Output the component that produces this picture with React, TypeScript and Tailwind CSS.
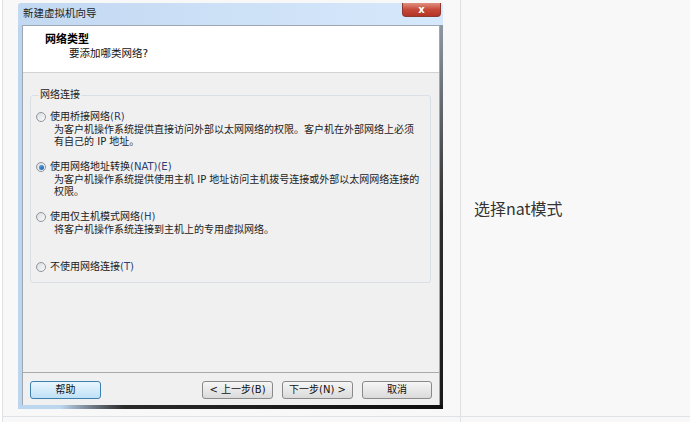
import React from 'react';

const dialogFont = {
  fontFamily: '"DejaVu Sans", "Noto Sans CJK SC", sans-serif',
};
const pageFont = {
  fontFamily: '"Noto Sans CJK SC", "Liberation Sans", sans-serif',
};

type Opt = {
  label: string;
  hint: string;
  lines: string[];
  checked?: boolean;
};

const options: Opt[] = [
  {
    label: '使用桥接网络',
    hint: '(R)',
    lines: [
      '为客户机操作系统提供直接访问外部以太网网络的权限。客户机在外部网络上必须',
      '有自己的 IP 地址。',
    ],
  },
  {
    label: '使用网络地址转换',
    hint: '(NAT)(E)',
    lines: [
      '为客户机操作系统提供使用主机 IP 地址访问主机拨号连接或外部以太网网络连接的',
      '权限。',
    ],
    checked: true,
  },
  {
    label: '使用仅主机模式网络',
    hint: '(H)',
    lines: ['将客户机操作系统连接到主机上的专用虚拟网络。'],
  },
  { label: '不使用网络连接', hint: '(T)', lines: [] },
];

function Radio({ checked }: { checked?: boolean }) {
  return (
    <span className="flex h-[10px] w-[10px] shrink-0 items-center justify-center rounded-full border border-[#8f959b] bg-linear-to-br from-[#d9dcdf] to-[#fbfbfb]">
      {checked ? (
        <span className="h-[5px] w-[5px] rounded-full bg-linear-to-br from-[#5aa0e4] to-[#1b5fa8]" />
      ) : null}
    </span>
  );
}

function Option({ opt, last }: { opt: Opt; last?: boolean }) {
  return (
    <div className={last ? '' : 'h-[50px]'}>
      <div className="flex h-[12.5px] items-center gap-[4px]">
        <Radio checked={opt.checked} />
        <span className="leading-[12.5px] text-[#1a1a1a]">
          {opt.label}
          <span className="text-[#2c3c74]">{opt.hint}</span>
        </span>
      </div>
      <div className="pl-[18px] text-[#222]">
        {opt.lines.map((l) => (
          <div key={l} className="h-[12.5px] whitespace-nowrap leading-[12.5px]">
            {l}
          </div>
        ))}
      </div>
    </div>
  );
}

function Button({
  children,
  primary,
  className = '',
}: {
  children: React.ReactNode;
  primary?: boolean;
  className?: string;
}) {
  return (
    <div
      className={`flex h-[18px] items-center justify-center rounded-[3px] border text-[10px] leading-none text-[#111] ${
        primary
          ? 'border-[#3c7fb1] bg-linear-to-b from-[#eaf6fd] to-[#bfe1f7]'
          : 'border-[#8a8a8a] bg-linear-to-b from-[#f6f6f6] to-[#dadada]'
      } ${className}`}
    >
      {children}
    </div>
  );
}

function WizardDialog() {
  return (
    <div className="flex w-[425px] flex-col text-[10px]" style={dialogFont}>
      {/* title bar */}
      <div className="flex h-[22px] items-start justify-between rounded-t-[3px] bg-linear-to-r from-[#c3d9f2] to-[#d6e8fb]">
        <span className="pl-[5px] pt-[3px] text-[10.5px] leading-[14px] text-[#1e1e1e]">
          新建虚拟机向导
        </span>
        <div className="mr-[2px] flex h-[14px] w-[39px] items-center justify-center rounded-b-[4px] border border-t-0 border-[#8c3a30] bg-linear-to-b from-[#e08f80] via-[#c6493a] to-[#b33426]">
          <span className="text-[10px] font-bold leading-none text-white">x</span>
        </div>
      </div>

      <div className="flex">
        <div className="w-[4px] bg-[#bdd6f0]" />
        <div className="flex w-[418px] flex-col border-x border-t border-[#9fa8b2]">
          {/* header */}
          <div className="h-[47px] border-b border-[#d2d2d2] bg-white pt-[7px]">
            <div className="pl-[22px] text-[11px] font-bold leading-[14px] text-black">
              网络类型
            </div>
            <div className="pl-[46px] text-[10.5px] leading-[13px] text-[#111]">
              要添加哪类网络?
            </div>
          </div>

          {/* body */}
          <div className="flex h-[332px] flex-col bg-[#f0f0f0]">
            <fieldset className="ml-[7px] mr-[8px] mt-[16px] rounded-[3px] border border-[#d9dfe4] pb-[8.5px] pl-[5px] pt-[10px]">
              <legend className="ml-[3px] px-[1px] leading-[12px] text-[#1a1a1a]">
                网络连接
              </legend>
              {options.map((o, i) => (
                <Option key={o.label} opt={o} last={i === options.length - 1} />
              ))}
            </fieldset>
            <div className="flex-1" />
            <div className="border-t border-[#a9a9a9]" />
            <div className="flex px-[7px] pb-[6px] pt-[8px]">
              <Button primary className="w-[71px]">
                帮助
              </Button>
              <div className="flex-1" />
              <Button className="w-[71px]">&lt; 上一步(B)</Button>
              <Button className="ml-[9px] w-[71px]">下一步(N) &gt;</Button>
              <Button className="ml-[9px] w-[70px]">取消</Button>
            </div>
          </div>
        </div>
        <div className="w-[3px] bg-linear-to-b from-[#8f99a3] via-[#2e2e2e] to-[#1a1a1a]" />
      </div>
      <div className="h-[4px] bg-linear-to-r from-[#bdd6f0] from-10% via-[#2a2a2a] via-25% to-[#0f0f0f]" />
    </div>
  );
}

export default function App() {
  return (
    <div className="h-[422px] w-[690px] overflow-hidden bg-white" style={pageFont}>
      <div className="ml-[2px] flex h-[417px] border-b border-l border-[#dfe2e5]">
        <div className="w-[458px] border-r border-[#dfe2e5] bg-[#f8f8f8] pl-[15px] pt-[3px]">
          <WizardDialog />
        </div>
        <div className="flex flex-1 items-center bg-[#f8f8f8] pl-[13px] text-[16px] text-[#333]">
          选择nat模式
        </div>
      </div>
      <div className="ml-[2px] flex h-[5px] border-l border-[#dfe2e5]">
        <div className="w-[458px] border-r border-[#dfe2e5] bg-[#f8f8f8]" />
        <div className="flex-1 bg-[#f8f8f8]" />
      </div>
    </div>
  );
}
